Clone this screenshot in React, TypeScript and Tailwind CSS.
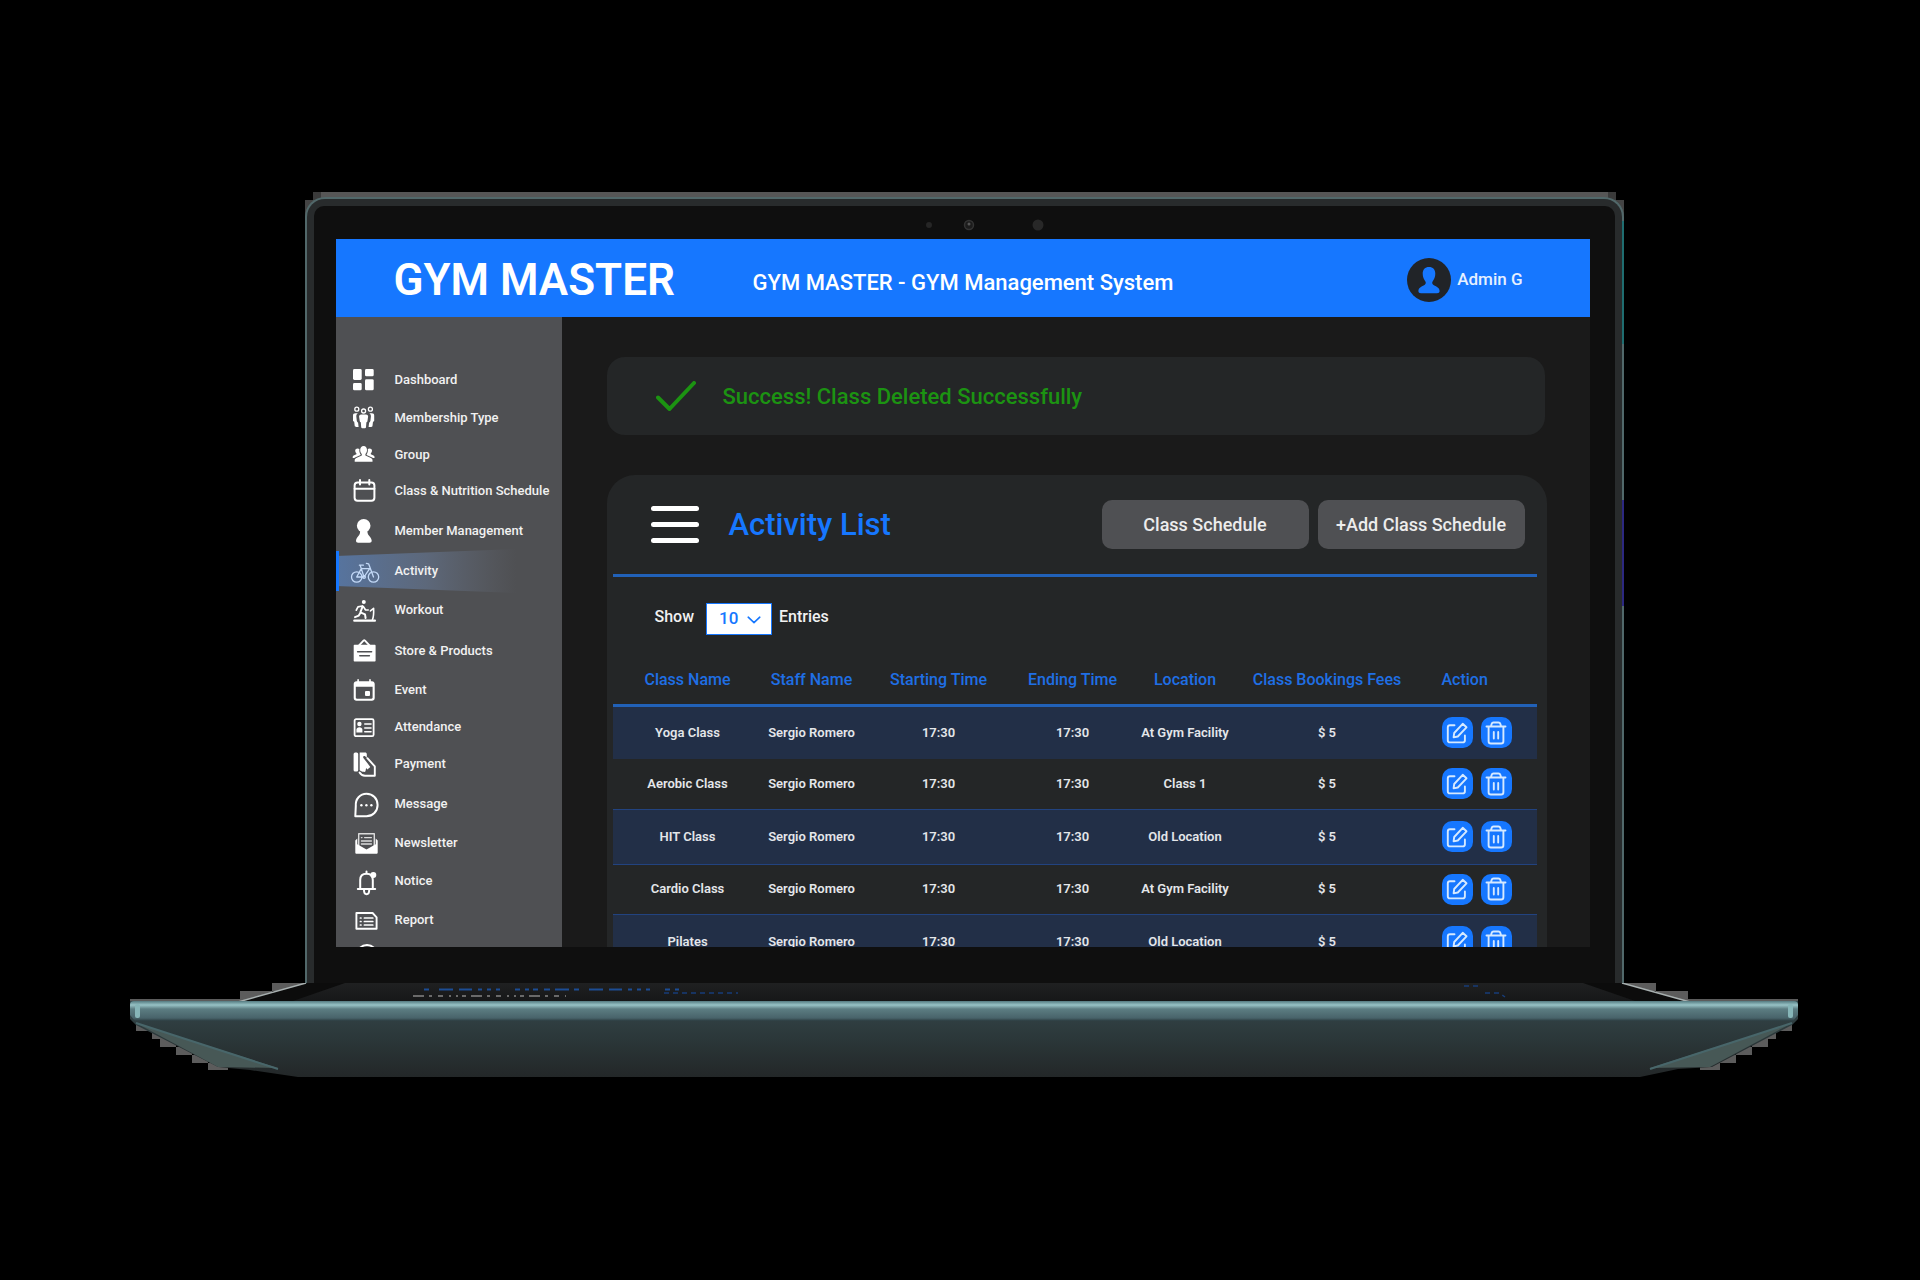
import React from "react";

const Svg = ({ children }: { children: React.ReactNode }) => (
  <svg viewBox="0 0 28 28" className="size-7 shrink-0 overflow-visible" fill="currentColor" aria-hidden="true">
    {children}
  </svg>
);

const line = { fill: "none", stroke: "currentColor", strokeLinecap: "round", strokeLinejoin: "round" } as const;

const icons = {
  dashboard: (
    <Svg>
      <rect x="3" y="3" width="8.7" height="11" rx="1.4" />
      <rect x="3" y="17" width="8.7" height="7.3" rx="1.4" />
      <rect x="15" y="3" width="8.7" height="7.3" rx="1.4" />
      <rect x="15" y="13.2" width="8.7" height="11.1" rx="1.4" />
    </Svg>
  ),
  membership: (
    <Svg>
      <g {...line} strokeWidth="1.3">
        <circle cx="6.8" cy="5.2" r="2" />
        <circle cx="20.4" cy="5.2" r="2" />
        <circle cx="13.6" cy="7" r="2" />
      </g>
      <path d="M11.2 10.4h4.8c1.5 0 2.3 1 2.1 2.4l-.7 4.4c-.1.6-.5 1-1 1.1l-.4 5c-.1.7-.5 1-1.1 1h-2.600c-.6 0-1-.3-1.100-1l-.4-5c-.5-.1-.9-.5-1-1.100l-.7-4.400c-.2-1.400.6-2.400 2.100-2.400z" />
      <path d="M8 9.200H5.300C3.800 9.200 3 10 3 11.400v5.100c0 .8.600 1.200 1.200 1.200l.5 4c.1.800.6 1.200 1.300 1.200h2.600l-.5-4.200c-.8-.5-1.200-1.200-1.300-2l-.5-4.300c-.1-1.300.5-2.500 1.700-3.200zM19.200 9.200h2.700c1.500 0 2.300.8 2.300 2.200v5.100c0 .8-.6 1.200-1.200 1.200l-.5 4c-.1.800-.6 1.200-1.300 1.200h-2.600l.5-4.200c.8-.5 1.200-1.200 1.300-2l.5-4.300c.1-1.300-.5-2.500-1.700-3.200z" />
    </Svg>
  ),
  group: (
    <Svg>
      <path d="M13.600 5c2.200 0 3.400 1.700 3.400 4 0 1.600-.6 3.200-1.600 4.100v1.500l5.500 2.400c1 .5 1.600 1.300 1.600 2.300v1.400H4.700v-1.400c0-1 .6-1.800 1.600-2.300l5.500-2.400v-1.500c-1-.9-1.600-2.500-1.600-4.100 0-2.300 1.200-4 3.400-4z" />
      <path d="M7.700 7.400c.7 0 1.300.2 1.700.6-.3 2 .2 4 1.200 5.500v.5l-5 2.200c-.5.200-.9.500-1.200.8H2.700v-1c0-.7.4-1.200 1-1.500l2.700-1.200v-1c-.8-.7-1.200-1.800-1.200-2.800 0-1.300 1.200-2.100 2.500-2.100zM19.500 7.400c-.7 0-1.300.2-1.700.6.3 2-.2 4-1.200 5.500v.5l5 2.200c.5.200.9.500 1.200.8h1.700v-1c0-.7-.4-1.200-1-1.500l-2.700-1.200v-1c.8-.7 1.200-1.800 1.200-2.800 0-1.300-1.200-2.100-2.500-2.100z" />
    </Svg>
  ),
  calendar: (
    <Svg>
      <g {...line} strokeWidth="2">
        <rect x="4.600" y="5.600" width="19.800" height="18.200" rx="3" />
        <path d="M4.600 11.800h19.800M10 3v4.600M19.300 3v4.600" />
      </g>
    </Svg>
  ),
  member: (
    <Svg>
      <circle cx="13.700" cy="8.800" r="6.800" />
      <path d="M10 13h7.400c-.2 2.500.3 4.300 1.900 6 1.500 1.600 2.400 3.300 2.400 4.800 0 1.200-.8 1.900-2.200 1.900H8.200c-1.400 0-2.200-.7-2.200-1.900 0-1.500.9-3.200 2.400-4.800 1.500-1.700 2-3.500 1.600-6z" />
    </Svg>
  ),
  bike: (
    <Svg>
      <g {...line} strokeWidth="1.300">
        <circle cx="6.700" cy="20" r="5.200" />
        <circle cx="23.500" cy="20" r="5.200" />
        <path d="M6.700 20l4.600-8.400h8.400L14 20H6.700M11.300 11.600L14 20M9.400 8.200h4M11.300 11.600l-1.200-3.400M16.400 6.400l2.200.4 4.900 13.200" />
        <circle cx="14" cy="20" r="1.400" />
      </g>
    </Svg>
  ),
  workout: (
    <Svg>
      <circle cx="13.800" cy="6" r="2" />
      <g {...line} strokeWidth="2">
        <path d="M12.600 10.400l-2.200 6 4.600 2 .6 3.600M10.600 16.600l-1.800 3-3.800 1.600" />
        <path d="M12.400 10l-4.400.8-1.700 3.400M13.400 10.600l2 3.200 2.800.2" strokeWidth="1.700" />
        <path d="M22.500 23.500c1.400-3.200 1.300-7 1.100-11.200l-3.200 2.600" strokeWidth="1.600" />
        <path d="M4.300 24.700h20.600" strokeWidth="2.300" />
      </g>
    </Svg>
  ),
  store: (
    <Svg>
      <path d="M8.800 8.600l4.700-5c.5-.5 1-.5 1.500 0l4.700 5" {...line} strokeWidth="1.900" />
      <path d="M4.700 7.800h19.900c.6 0 1 .4 1 1v14.800c0 .6-.4 1-1 1H4.700c-.6 0-1-.4-1-1V8.800c0-.6.4-1 1-1z" />
      <path d="M7.600 14.700h14M9.800 18.700h9.600" className="stroke-[#4f5053]" strokeWidth="1.500" strokeLinecap="round" />
    </Svg>
  ),
  event: (
    <Svg>
      <path
        fillRule="evenodd"
        d="M6.500 5.300h.8V3.700c0-.5.3-.8.800-.8s.8.300.8.800v1.600h10.300V3.700c0-.5.300-.8.800-.8s.8.300.8.800v1.600h1.100c1.700 0 2.800 1.100 2.800 2.800v13.800c0 1.700-1.100 2.800-2.800 2.800H6.500c-1.700 0-2.800-1.100-2.800-2.800V8.100c0-1.700 1.100-2.800 2.800-2.800zM5.800 10.800v10.800c0 .7.400 1.100 1.100 1.100h14.600c.7 0 1.100-.4 1.100-1.100V10.800z"
      />
      <rect x="15" y="15" width="5" height="5" rx="1" />
    </Svg>
  ),
  attendance: (
    <Svg>
      <rect x="4.600" y="6.200" width="19" height="17" rx="1.500" {...line} strokeWidth="1.800" />
      <circle cx="9.400" cy="11" r="2.200" />
      <path d="M6.400 19.400v-2.600c0-1.600 1.300-2.600 3-2.600s3 1 3 2.600v2.600z" />
      <path d="M14.800 11h6.200M14.800 15h6.200M14.800 18.800h6.200" {...line} strokeWidth="1.600" />
    </Svg>
  ),
  payment: (
    <Svg>
      <rect x="3.600" y="2.400" width="4.600" height="19.200" rx="1.500" />
      <path d="M9.700 2.400h5.400c1 0 1.700.7 1.700 1.600v3.700l-1.700-1.500c-1.200-.9-2.500.4-1.700 1.700l6.900 9-2.900 2.500-1.300-1.300-.6 3.200c-.4.600-1.100.7-1.900.5-1.500-.3-3.200-.6-3.900-1.900z" />
      <path d="M17.400 8.200l7.400 8.200v9.300H15c-2.300 0-4.300-1.200-5.400-3.200" {...line} strokeWidth="1.900" />
    </Svg>
  ),
  message: (
    <Svg>
      <path d="M5.300 26.300l.5-10.400C5.300 9 10 3.800 16.500 3.800S27.600 8.700 27.600 15 22.800 26.200 16.500 26.300z" {...line} strokeWidth="2" />
      <circle cx="11.400" cy="15.200" r="1.200" />
      <circle cx="16.400" cy="15.200" r="1.200" />
      <circle cx="21.400" cy="15.200" r="1.200" />
    </Svg>
  ),
  newsletter: (
    <Svg>
      <path d="M8.700 17V4.800h15.600V17" {...line} strokeWidth="1.400" className="opacity-80" />
      <path d="M14.600 8.600h6.800M11.400 12h10M11.400 15h10M11.400 8.600h.6" {...line} strokeWidth="1.300" className="opacity-80" />
      <path d="M5.300 11.500l2-2v5.800l9.200 5.300 9.200-5.300V9.500l2 2v12c0 .8-.5 1.300-1.300 1.300H6.600c-.8 0-1.300-.5-1.300-1.300z" />
    </Svg>
  ),
  notice: (
    <Svg>
      <path d="M7.800 22h17.400M10.200 22v-9c0-3.900 2.500-6.300 6.300-6.300s6.300 2.400 6.300 6.300v9M16.500 4.600v1.600M14 23c0 2.700 1 4.200 2.600 4.200s2.600-1.500 2.600-4.200" {...line} strokeWidth="2" />
      <circle cx="23.300" cy="8" r="3" />
    </Svg>
  ),
  report: (
    <Svg>
      <path d="M6.400 7h16.200l4 4.300v11.500H6.400z" {...line} strokeWidth="1.900" />
      <path d="M10.400 12h.6M10.400 15.500h.6M10.400 19h.6M14.400 12h8.400M14.400 15.500h8.400M14.400 19h8.400" {...line} strokeWidth="1.700" />
    </Svg>
  ),
  more: (
    <Svg>
      <circle cx="17" cy="16" r="10" {...line} strokeWidth="2" />
    </Svg>
  ),
};

const menu = [
  { label: "Dashboard", icon: icons.dashboard, size: "h-[38px]" },
  { label: "Membership Type", icon: icons.membership, size: "h-[38px]" },
  { label: "Group", icon: icons.group, size: "h-9" },
  { label: "Class & Nutrition Schedule", icon: icons.calendar, size: "h-9" },
  { label: "Member Management", icon: icons.member, size: "h-11" },
  { label: "Activity", icon: icons.bike, size: "h-9", active: true },
  { label: "Workout", icon: icons.workout, size: "h-[42px]" },
  { label: "Store & Products", icon: icons.store, size: "h-10" },
  { label: "Event", icon: icons.event, size: "h-[38px]" },
  { label: "Attendance", icon: icons.attendance, size: "h-9" },
  { label: "Payment", icon: icons.payment, size: "h-[38px]" },
  { label: "Message", icon: icons.message, size: "h-[42px]" },
  { label: "Newsletter", icon: icons.newsletter, size: "h-9" },
  { label: "Notice", icon: icons.notice, size: "h-10" },
  { label: "Report", icon: icons.report, size: "h-[38px]" },
];

const rows = [
  { name: "Yoga Class", location: "At Gym Facility" },
  { name: "Aerobic Class", location: "Class 1" },
  { name: "HIT Class", location: "Old Location" },
  { name: "Cardio Class", location: "At Gym Facility" },
  { name: "Pilates", location: "Old Location" },
];

function Header() {
  return (
    <header className="flex h-[78px] shrink-0 items-center bg-[#1677ff] pl-[58px] pr-[67px] font-medium text-white">
      <h1 className="w-[359px] pt-1 text-[44px] leading-none font-semibold whitespace-nowrap">GYM MASTER</h1>
      <p className="grow pt-2.5 text-[22px] leading-none whitespace-nowrap">GYM MASTER - GYM Management System</p>
      <button type="button" className="flex items-center gap-1.5 pt-1 text-[17px] text-[#e6f0ff]">
        <svg viewBox="0 0 44 44" className="size-11" aria-hidden="true">
          <circle cx="22" cy="22" r="22" className="fill-[#212428]" />
          <path
            className="fill-[#1677ff]"
            d="M22 9c4 0 6.300 2.600 6.300 6.800 0 3.400-1.200 5.600-2.700 7.600-.7 1-.4 2.500.6 3.300 1.700 1.300 6.400 2.300 6.400 6.400 0 1.500-1 2.200-2.600 2.200H14c-1.600 0-2.600-.7-2.600-2.200 0-4.100 4.700-5.100 6.400-6.400 1-.8 1.300-2.300.6-3.300-1.500-2-2.700-4.200-2.700-7.600C15.700 11.600 18 9 22 9z"
          />
        </svg>
        Admin G
      </button>
    </header>
  );
}

function Sidebar() {
  return (
    <nav className="w-[226px] shrink-0 bg-[#4f5053] pt-11">
      <ul>
        {menu.map((item) => (
          <li key={item.label} className={item.size}>
            <a href="#" className="relative flex h-full items-center gap-[17px] pl-[14px] text-[13px] font-medium whitespace-nowrap text-[#f1f1f1]">
              {item.active && (
                <svg viewBox="0 0 190 44" preserveAspectRatio="none" className="absolute -top-1 left-0 h-11 w-[190px]" aria-hidden="true">
                  <defs>
                    <linearGradient id="glow">
                      <stop offset="0" stopColor="#5778a8" stopOpacity="0.9" />
                      <stop offset="0.5" stopColor="#647590" stopOpacity="0.65" />
                      <stop offset="1" stopColor="#6b7280" stopOpacity="0" />
                    </linearGradient>
                  </defs>
                  <path d="M0 7L180 0V44L0 37z" fill="url(#glow)" />
                  <rect y="2" width="3" height="40" fill="#1677ff" />
                </svg>
              )}
              <span className={item.active ? "relative text-[#c3d9f7]" : "relative text-white"}>{item.icon}</span>
              <span className="relative">{item.label}</span>
            </a>
          </li>
        ))}
        <li className="h-10 pl-[14px] text-white">{icons.more}</li>
      </ul>
    </nav>
  );
}

function ActionButtons({ name }: { name: string }) {
  return (
    <div className="flex gap-2">
      <button type="button" aria-label={`Edit ${name}`} className="flex size-[31px] items-center justify-center rounded-[10px] bg-[#1677ff] text-[#d5e9ff]">
        <svg viewBox="0 0 24 24" className="size-6" {...line} strokeWidth="1.900" aria-hidden="true">
          <path d="M9.500 4.300H5A2.200 2.200 0 0 0 2.800 6.500v12.700A2.200 2.200 0 0 0 5 21.400h12.700a2.200 2.200 0 0 0 2.200-2.200v-4.700" />
          <path d="M17.700 2.800l3.800 3.500-8.700 9.200-4.200.9.600-4.400z" />
        </svg>
      </button>
      <button type="button" aria-label={`Delete ${name}`} className="flex size-[31px] items-center justify-center rounded-[10px] bg-[#1677ff] text-[#d5e9ff]">
        <svg viewBox="0 0 24 24" className="size-6" {...line} strokeWidth="1.900" aria-hidden="true">
          <path d="M2.500 5.500h19M4.600 5.500v14.700c0 1.400.9 2.300 2.300 2.300h10.200c1.400 0 2.300-.9 2.300-2.300V5.500M7 5.300l.6-2.300c.3-1 .9-1.500 1.900-1.500h5c1 0 1.600.5 1.900 1.500l.6 2.300M9.800 11v6.500M14.200 11v6.500" />
        </svg>
      </button>
    </div>
  );
}

function ActivityTable() {
  return (
    <table className="w-full table-fixed text-center text-[13px] font-semibold whitespace-nowrap text-[#e4e6ea]">
      <colgroup>
        <col className="w-[150px]" />
        <col className="w-[98px]" />
        <col className="w-[156px]" />
        <col className="w-[112px]" />
        <col className="w-[113px]" />
        <col className="w-[171px]" />
        <col className="w-[124px]" />
      </colgroup>
      <thead className="text-base text-[#1f6fe5]">
        <tr className="h-[52px] border-b-[3px] border-[#2161b8]">
          <th className="pt-1 font-medium">Class Name</th>
          <th className="pt-1 font-medium">Staff Name</th>
          <th className="pt-1 font-medium">Starting Time</th>
          <th className="pt-1 font-medium">Ending Time</th>
          <th className="pt-1 font-medium">Location</th>
          <th className="pt-1 font-medium">Class Bookings Fees</th>
          <th className="pt-1 pl-[29px] text-left font-medium">Action</th>
        </tr>
      </thead>
      <tbody>
        {rows.map((row, i) => (
          <tr
            key={row.name}
            className={i === 0 ? "h-[54px] bg-[#222f47]" : i % 2 ? "h-[50px]" : "h-[55px] border-y border-[#224380] bg-[#222f47]"}
          >
            <td>{row.name}</td>
            <td>Sergio Romero</td>
            <td>17:30</td>
            <td>17:30</td>
            <td>{row.location}</td>
            <td>$ 5</td>
            <td className="pl-[29px]">
              <ActionButtons name={row.name} />
            </td>
          </tr>
        ))}
      </tbody>
    </table>
  );
}

function Content() {
  return (
    <main className="grow bg-[#1a1a1a] pt-10 pr-[43px] pl-[45px]">
      <div role="status" className="mr-0.5 flex h-[78px] items-center gap-[27px] rounded-[18px] bg-[#242627] pl-[49px] text-[22px] font-medium text-[#1c9312]">
        <svg viewBox="0 0 40 30" className="h-[30px] w-10" {...line} strokeWidth="4" aria-hidden="true">
          <path d="M2 16.500l11.500 11.500L38 2" />
        </svg>
        Success! Class Deleted Successfully
      </div>
      <section className="mt-10 rounded-t-[28px] bg-[#242627] pr-[10px] pl-[6px]">
        <div className="flex h-[102px] items-center border-b-[3px] border-[#2161b8] pr-3 pl-[38px]">
          <button type="button" aria-label="Menu" className="flex w-12 flex-col gap-[11px]">
            <span className="h-[5px] rounded-full bg-white" />
            <span className="h-[5px] rounded-full bg-white" />
            <span className="h-[5px] rounded-full bg-white" />
          </button>
          <h2 className="grow pt-0.5 pl-[30px] text-[31px] font-medium text-[#1677ff]">Activity List</h2>
          <div className="flex gap-[9px] text-lg font-medium text-[#ececec]">
            <button type="button" className="h-[49px] w-[207px] rounded-[10px] bg-[#4f5053]">Class Schedule</button>
            <button type="button" className="h-[49px] w-[207px] rounded-[10px] bg-[#4f5053]">+Add Class Schedule</button>
          </div>
        </div>
        <div className="flex h-[76px] items-end pb-[18px] pl-[42px] text-base font-medium text-[#f1f1f1]">
          <label htmlFor="entries" className="flex h-8 items-center pb-1">Show</label>
          <div className="relative mr-[7px] ml-3">
            <select id="entries" defaultValue="10" className="h-8 w-[66px] appearance-none border border-[#1677ff] bg-white pl-3 text-[17px] font-medium text-[#1677ff]">
              <option>10</option>
              <option>25</option>
              <option>50</option>
            </select>
            <svg viewBox="0 0 14 8" className="pointer-events-none absolute top-[13px] right-[11px] h-2 w-3.5 text-[#1677ff]" {...line} strokeWidth="1.600" aria-hidden="true">
              <path d="M1.200 1.200L7 6.600l5.800-5.400" />
            </svg>
          </div>
          <span className="flex h-8 items-center pb-1">Entries</span>
        </div>
        <ActivityTable />
      </section>
    </main>
  );
}

function LaptopBase() {
  return (
    <svg viewBox="130 984 1668 96" className="block w-full" aria-hidden="true">
      <defs>
        <linearGradient id="body" x1="0" y1="0" x2="0" y2="1">
          <stop offset="0" stopColor="#34464a" />
          <stop offset="0.5" stopColor="#2b3739" />
          <stop offset="1" stopColor="#232728" />
        </linearGradient>
        <linearGradient id="lip" x1="0" y1="0" x2="0" y2="1">
          <stop offset="0" stopColor="#547a80" />
          <stop offset="0.2" stopColor="#98c3c6" />
          <stop offset="0.4" stopColor="#5c7d82" />
          <stop offset="0.85" stopColor="#48636a" />
          <stop offset="1" stopColor="#2c3c40" />
        </linearGradient>
        <linearGradient id="deck" x1="0" y1="0" x2="0" y2="1">
          <stop offset="0" stopColor="#1f2021" />
          <stop offset="1" stopColor="#161718" />
        </linearGradient>
      </defs>
      <g fill="#5c5c5c" shapeRendering="crispEdges">
        <path d="M272 984h32v8h-32zM240 992h32v8h-32zM130 1000h126v3H130zM136 1024h16v8h-16zM152 1032h16v8h-16zM160 1040h16v8h-16zM176 1048h16v8h-16zM192 1056h16v8h-16zM208 1064h20v7h-20z" />
        <path d="M1656 984h-32v8h32zM1688 992h-32v8h32zM1798 1000h-126v3h126zM1792 1024h-16v8h16zM1776 1032h-16v8h16zM1768 1040h-16v8h16zM1752 1048h-16v8h16zM1736 1056h-16v8h16zM1720 1064h-20v7h20z" />
      </g>
      <path d="M306 984H1622L1690 1003H238z" fill="url(#deck)" />
      <path d="M306 984L238 1003H290L345 984zM1622 984L1690 1003H1638L1583 984z" fill="#0c0c0c" />
      <path d="M306 984L238 1003M1622 984l68 19" stroke="#a8b0b0" strokeWidth="1.500" />
      <path d="M424 990.500h258" stroke="#1c4d94" strokeWidth="2" strokeDasharray="5 10 14 6 13 6 4 5 4 5 4 15 5 5 4 4 5 6 6 5 14 5" />
      <path d="M413 997h153" stroke="#6a6a6a" strokeWidth="2" strokeDasharray="11 5 3 6 5 6 2 5 2 4 4 5" />
      <path d="M664 994h74M1464 987h14M1485 994h14l6 4" fill="none" stroke="#173c78" strokeWidth="1.500" strokeDasharray="5 4" />
      <path d="M130 1002H1798V1020l-6 6L1712 1068l-34 2L1640 1078H298L250 1071 218 1068 136 1026l-6-6z" fill="url(#body)" />
      <path d="M136 1024L218 1068l60 1z" fill="#475856" />
      <path d="M1792 1024L1710 1068l-60 1z" fill="#475856" />
      <path d="M136 1024L278 1070M1792 1024L1650 1070" stroke="#48666a" strokeWidth="2" />
      <path d="M134 1002H1794q4 0 4 4v10l-5 6H135l-5-6v-10q0-4 4-4z" fill="url(#lip)" />
      <rect x="135" y="1005" width="5" height="14" rx="2" fill="#86b5b8" />
      <rect x="1788" y="1005" width="5" height="14" rx="2" fill="#86b5b8" />
    </svg>
  );
}

export default function App() {
  return (
    <div className="min-h-screen bg-black pt-48 pl-2 font-['Roboto',sans-serif]">
      <div className="mx-auto w-full max-w-[1668px]">
        <div className="relative mx-auto w-full max-w-[1319px] pt-[5px]">
          <div className="absolute top-0 right-2 left-2 h-2 bg-[#3a3a3a]" />
          <div className="absolute top-0 right-4 left-4 h-2 bg-[#565656]" />
          <div className="absolute top-2 right-0 left-0 h-5 bg-[#444]" />
          <div className="relative rounded-t-[20px] bg-[#51686a] px-[2px] pt-[2px]">
            <span className="absolute top-6 right-0 h-[123px] w-0.5 bg-[#1f6d70]" />
            <span className="absolute top-[303px] right-0 h-[106px] w-0.5 bg-[#2c2880]" />
            <div className="rounded-t-[18px] bg-[#282b2c] px-[7px] pt-[7px]">
              <div className="relative rounded-t-[10px] bg-[#0f0f0f] pt-[33px] pr-[25px] pb-9 pl-[22px]">
                <svg viewBox="0 0 120 14" className="absolute top-3 left-[610px] h-3.5 w-[120px]" aria-hidden="true">
                  <circle cx="5" cy="7" r="3" fill="#262626" />
                  <circle cx="45" cy="7" r="4.500" fill="#1c1c1c" stroke="#333" strokeWidth="1.500" />
                  <circle cx="45" cy="6" r="1.500" fill="#555" />
                  <circle cx="114" cy="7" r="5.500" fill="#282828" />
                </svg>
                <div className="flex aspect-[1254/708] flex-col overflow-hidden">
                  <Header />
                  <div className="flex min-h-0 grow">
                    <Sidebar />
                    <Content />
                  </div>
                </div>
              </div>
            </div>
          </div>
        </div>
        <LaptopBase />
      </div>
    </div>
  );
}
